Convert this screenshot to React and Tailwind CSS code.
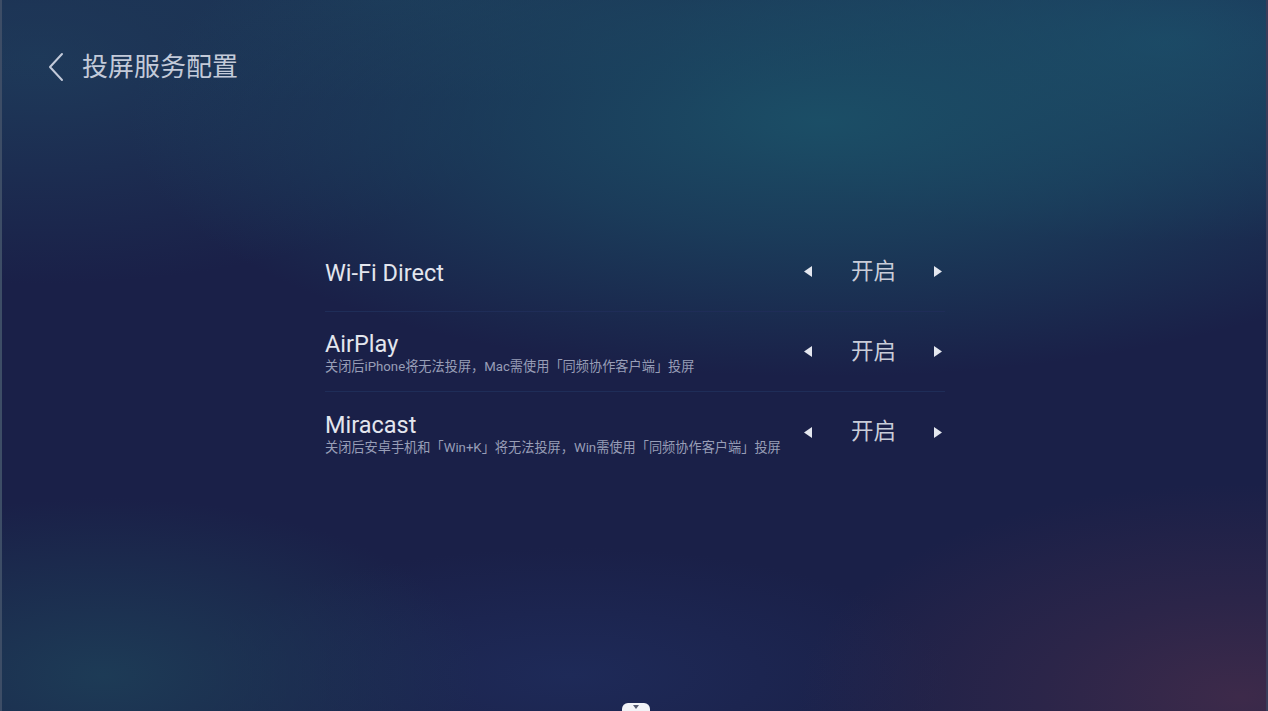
import React from 'react';

const rows = [
  { title: 'Wi-Fi Direct', desc: '', value: '开启' },
  { title: 'AirPlay', desc: '关闭后iPhone将无法投屏，Mac需使用「同频协作客户端」投屏', value: '开启' },
  { title: 'Miracast', desc: '关闭后安卓手机和「Win+K」将无法投屏，Win需使用「同频协作客户端」投屏', value: '开启' },
];

const Arrow = ({ dir }) => (
  <svg width="8" height="11" viewBox="0 0 8 11" className="block">
    {dir === 'left' ? <path d="M8 0 L8 11 L0 5.5 Z" fill="#e4e7ef" /> : <path d="M0 0 L0 11 L8 5.5 Z" fill="#e4e7ef" />}
  </svg>
);

const Row = ({ item, last }) => (
  <div className={`flex items-center justify-between h-[80px] ${last ? '' : 'border-b border-[#1f2d58]'}`}>
    <div className="flex flex-col pt-[3px]">
      <span className="text-[23.5px] leading-[28px] text-[#e3e6ee]">{item.title}</span>
      {item.desc && <span className="text-[13.2px] leading-[18px] text-[#989eb7]">{item.desc}</span>}
    </div>
    <div className="flex items-center pr-[3px]">
      <Arrow dir="left" />
      <span className="text-[22.5px] leading-[26px] text-[#c9cdd9] ml-[39px] mr-[38px] -mt-[2px]">{item.value}</span>
      <Arrow dir="right" />
    </div>
  </div>
);

const App = () => {
  return (
    <div
      className="relative w-full h-[711px] overflow-hidden border-l-2 border-r-2 border-l-[#3d4d66] border-r-[#3a3d5a] bg-[#1a2048] bg-[radial-gradient(ellipse_55%_36%_at_65%_17%,#1b4e66_0%,rgba(27,78,102,0.6)_45%,transparent_100%),radial-gradient(ellipse_40%_28%_at_92%_6%,#1c4766_0%,transparent_100%),radial-gradient(ellipse_60%_14%_at_30%_0%,#1d3656_0%,transparent_100%),radial-gradient(ellipse_40%_32%_at_3%_8%,#1e3a5a_0%,transparent_100%),radial-gradient(ellipse_35%_30%_at_98%_98%,#3d2a4a_0%,rgba(61,42,74,0.5)_45%,transparent_100%),radial-gradient(ellipse_30%_25%_at_8%_95%,#1d3b56_0%,transparent_100%),radial-gradient(ellipse_30%_18%_at_45%_95%,#1e2a58_0%,transparent_100%)]"
      style={{ fontFamily: "Roboto, 'Noto Sans CJK SC', sans-serif" }}
    >
      <div className="flex items-center pl-[43px] pt-[51px]">
        <svg width="22" height="30" viewBox="0 0 22 30" className="block">
          <path d="M17 2 L5 15 L17 28" fill="none" stroke="#c3cad9" strokeWidth="2" strokeLinecap="round" strokeLinejoin="round" />
        </svg>
        <span className="ml-[15px] text-[26px] leading-[32px] text-[#c3cad9]">投屏服务配置</span>
      </div>

      <div className="ml-[323px] w-[620px] mt-[149px]">
        {rows.map((item, i) => (
          <Row key={item.title} item={item} last={i === rows.length - 1} />
        ))}
      </div>

      <div className="absolute bottom-0 left-[620px] w-[28px] h-[8px] rounded-t-[6px] bg-[#f2f3f7] flex justify-center pt-[2px]">
        <svg width="6" height="4" viewBox="0 0 6 4" className="block">
          <path d="M0 0 L6 0 L3 4 Z" fill="#555a70" />
        </svg>
      </div>
    </div>
  );
};

export default App;
